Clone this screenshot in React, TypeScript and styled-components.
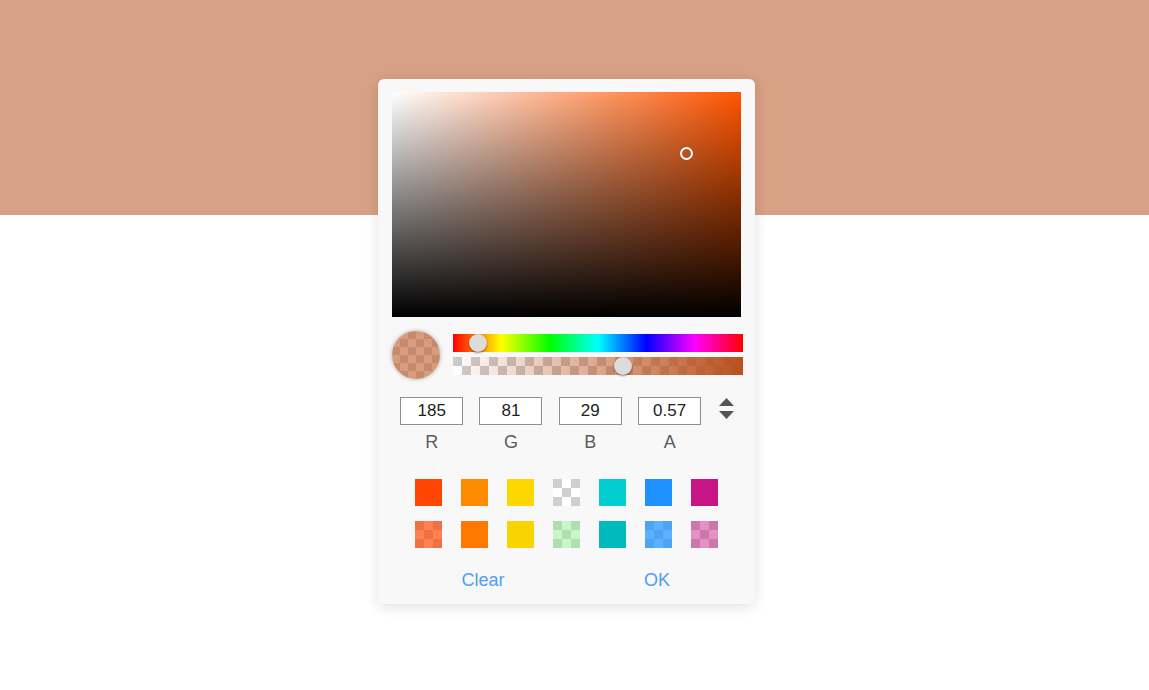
import React from "react";
import styled, { createGlobalStyle } from "styled-components";

const GlobalStyle = createGlobalStyle`
  html, body { margin: 0; padding: 0; background: #ffffff; }
  body { font-family: "Liberation Sans", Arial, sans-serif; }
  * { box-sizing: border-box; }
`;

const R = 185, G = 81, B = 29, A = 0.57;
const HUE = 20;
const SAT = (185 - 29) / 185;
const VAL = 185 / 255;
const RGB = `rgb(${R}, ${G}, ${B})`;
const RGBA = `rgba(${R}, ${G}, ${B}, ${A})`;

const checker = (size: number, dark = "#cccccc", light = "#ffffff") =>
  `conic-gradient(${light} 0 25%, ${dark} 0 50%, ${light} 0 75%, ${dark} 0) 0 0 / ${size * 2}px ${size * 2}px`;

const Page = styled.div`
  position: relative;
  width: 1149px;
  height: 690px;
  overflow: hidden;
`;

const Band = styled.div`
  height: 215px;
  background: #d8a085;
`;

const Panel = styled.div`
  position: absolute;
  left: 378px;
  top: 79px;
  width: 377px;
  padding: 13px 12px 12px 14px;
  background: #f8f8f8;
  border-radius: 6px;
  box-shadow: 0 3px 14px rgba(0, 0, 0, 0.12);
  display: flex;
  flex-direction: column;
`;

const SatArea = styled.div`
  position: relative;
  width: 349px;
  height: 225px;
  background: linear-gradient(to top, #000, rgba(0, 0, 0, 0)),
    linear-gradient(to right, #fff, rgba(255, 255, 255, 0)),
    hsl(${HUE}, 100%, 50%);
`;

const SatMarker = styled.div`
  position: absolute;
  width: 13px;
  height: 13px;
  margin: -6.5px 0 0 -6.5px;
  border: 2px solid #ffffff;
  border-radius: 50%;
  box-shadow: 0 0 1px rgba(0, 0, 0, 0.3);
`;

const ControlsRow = styled.div`
  display: flex;
  gap: 13px;
  margin-top: 14px;
  height: 48px;
`;

const Preview = styled.div`
  width: 48px;
  height: 48px;
  border-radius: 50%;
  background: linear-gradient(${RGBA}, ${RGBA}), ${checker(8, "#d6d6d6", "#ffffff")};
  box-shadow: 0 0 4px rgba(0, 0, 0, 0.3);
  flex: none;
`;

const Bars = styled.div`
  display: flex;
  flex-direction: column;
  gap: 5px;
  padding-top: 3px;
`;

const Bar = styled.div<{ $kind: "hue" | "alpha" }>`
  position: relative;
  width: 290px;
  height: 18px;
  background: ${(p) =>
    p.$kind === "hue"
      ? "linear-gradient(to right, #f00 0%, #ff0 16.66%, #0f0 33.33%, #0ff 50%, #00f 66.66%, #f0f 83.33%, #f00 100%)"
      : `linear-gradient(to right, rgba(${R},${G},${B},0), ${RGB}), ${checker(9, "#cccccc", "#ffffff")}`};
`;

const Thumb = styled.div`
  position: absolute;
  top: 0;
  width: 18px;
  height: 18px;
  border-radius: 50%;
  background: #dcdcdc;
  box-shadow: 0 1px 2px rgba(0, 0, 0, 0.45);
`;

const FieldsRow = styled.div`
  display: flex;
  align-items: flex-start;
  margin-top: 18px;
`;

const Fields = styled.div`
  display: grid;
  grid-template-columns: repeat(4, 79.33px);
`;

const Field = styled.div`
  display: flex;
  flex-direction: column;
  align-items: center;
  gap: 6px;
`;

const NumBox = styled.div`
  width: 63px;
  height: 28px;
  border: 1px solid #8e8e8e;
  background: #ffffff;
  display: flex;
  align-items: center;
  justify-content: center;
  font-size: 17px;
  color: #222;
`;

const Label = styled.div`
  font-size: 18px;
  line-height: 22px;
  color: #5c5c5c;
`;

const Spinner = styled.svg`
  margin-left: 10px;
  margin-top: 1px;
  flex: none;
`;

const Swatches = styled.div`
  display: grid;
  grid-template-columns: repeat(7, 27px);
  column-gap: 19px;
  row-gap: 15px;
  margin-top: 26px;
  padding-left: 23px;
`;

const Swatch = styled.div<{ $color: string }>`
  width: 27px;
  height: 27px;
  background: linear-gradient(${(p) => p.$color}, ${(p) => p.$color}), ${checker(9, "#cfcfcf", "#ffffff")};
`;

const Actions = styled.div`
  display: grid;
  grid-template-columns: 174px 174px;
  margin-top: 20px;
  padding-left: 4px;
`;

const ActionButton = styled.button`
  border: none;
  background: none;
  padding: 0;
  font-family: "Liberation Sans", Arial, sans-serif;
  font-size: 18px;
  line-height: 24px;
  color: #4c9ff4;
  text-align: center;
  cursor: pointer;
`;

const swatchColors = [
  "#ff4500",
  "#ff8c00",
  "#ffd700",
  "rgba(255,255,255,0)",
  "#00ced1",
  "#1e90ff",
  "#c71585",
  "rgba(255, 69, 0, 0.68)",
  "rgb(255, 120, 0)",
  "#fad400",
  "rgba(144, 240, 144, 0.5)",
  "#00babd",
  "rgba(31, 147, 255, 0.73)",
  "rgba(199, 21, 133, 0.47)",
];

export default function App() {
  const fields: [string, string][] = [
    [String(R), "R"],
    [String(G), "G"],
    [String(B), "B"],
    [String(A), "A"],
  ];
  return (
    <>
      <GlobalStyle />
      <Page>
        <Band />
        <Panel>
          <SatArea>
            <SatMarker style={{ left: `${SAT * 100}%`, top: `${(1 - VAL) * 100}%` }} />
          </SatArea>
          <ControlsRow>
            <Preview />
            <Bars>
              <Bar $kind="hue">
                <Thumb style={{ left: `${(HUE / 360) * 290}px` }} />
              </Bar>
              <Bar $kind="alpha">
                <Thumb style={{ left: `161px` }} />
              </Bar>
            </Bars>
          </ControlsRow>
          <FieldsRow>
            <Fields>
              {fields.map(([v, l]) => (
                <Field key={l}>
                  <NumBox>{v}</NumBox>
                  <Label>{l}</Label>
                </Field>
              ))}
            </Fields>
            <Spinner width="15" height="22" viewBox="0 0 15 22">
              <polygon points="7.5,0 15,8 0,8" fill="#555" />
              <polygon points="0,13 15,13 7.5,21" fill="#555" />
            </Spinner>
          </FieldsRow>
          <Swatches>
            {swatchColors.map((c, i) => (
              <Swatch key={i} $color={c} />
            ))}
          </Swatches>
          <Actions>
            <ActionButton>Clear</ActionButton>
            <ActionButton>OK</ActionButton>
          </Actions>
        </Panel>
      </Page>
    </>
  );
}
